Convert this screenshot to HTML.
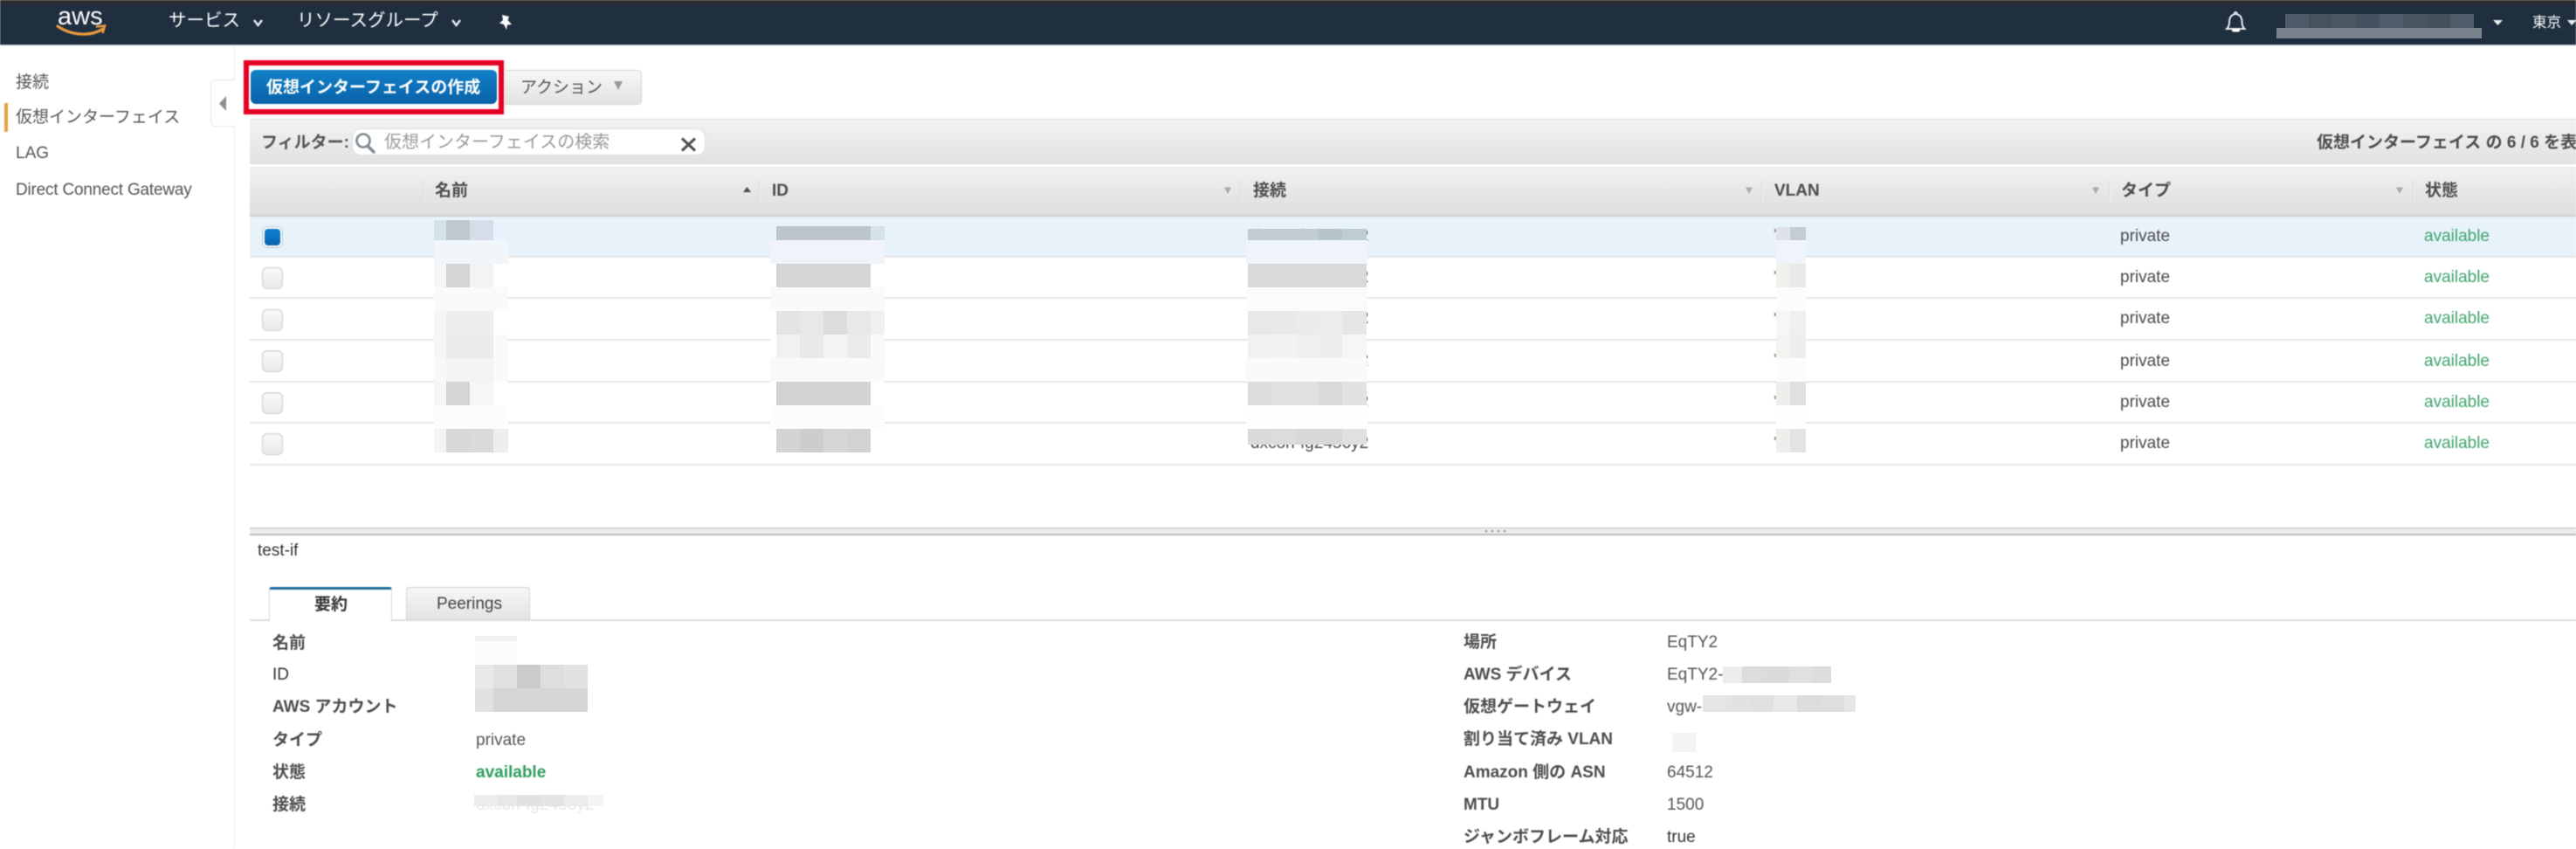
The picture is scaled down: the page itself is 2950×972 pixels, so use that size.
<!DOCTYPE html>
<html lang="ja"><head><meta charset="utf-8"><title>Direct Connect</title>
<style>
html,body{margin:0;padding:0;background:#fff}
#p{position:relative;width:2950px;height:972px;overflow:hidden;background:#fff;font-family:"Liberation Sans","Noto Sans CJK JP",sans-serif;font-size:19px;color:#444}
#b{position:absolute;left:0;top:0;width:2950px;height:972px;filter:blur(.6px)}
#b div,#b span{position:absolute}
.t{line-height:30px;height:30px;white-space:nowrap;color:#4a4a4a;margin-top:2px}
.h{font-weight:bold;color:#4d4d4d}
.n{color:#fff;font-size:20.5px}
.g{color:#3fa56f}
.r{left:286px;width:2664px;height:2px;background:#e4e6e8}
.cb{left:300px;width:22px;height:23px;border:1px solid #cfcfcf;border-radius:6px;background:linear-gradient(#fafafa,#e8e8e8);box-shadow:inset 0 0 0 1px #eee}
.d{top:207px;width:2px;height:25px;background:linear-gradient(90deg,#d6d6d6,#f6f6f6)}
.v{left:2032px;width:2px;height:4px;background:#a8897f}
svg{position:absolute;left:0;top:0}
</style></head><body>
<div id="p">
<div id="b">
<!-- top nav -->
<div style="left:0;top:0;width:2950px;height:51px;background:#1f2f3f"></div>
<div style="left:0;top:0;width:2950px;height:5px;background:#2b2b2b"></div>
<div style="left:0;top:51px;width:2950px;height:1px;background:#aab0b5"></div>
<div class="t" style="left:66px;top:-1px;color:#fff;font-size:29px;line-height:36px;height:36px">aws</div>
<div class="t n" style="left:193px;top:7px">サービス</div>
<div class="t n" style="left:340px;top:7px">リソースグループ</div>
<div class="t n" style="left:2900px;top:9px;font-size:16.5px">東京</div>

<!-- sidebar -->
<div style="left:268px;top:52px;width:1px;height:920px;background:#ececec"></div>
<div class="t" style="left:18px;top:78px;color:#555">接続</div>
<div class="t" style="left:18px;top:118px;color:#555">仮想インターフェイス</div>
<div style="left:5px;top:118px;width:4px;height:33px;background:#e8a33d"></div>
<div class="t" style="left:18px;top:159px;color:#555">LAG</div>
<div class="t" style="left:18px;top:201px;color:#555;letter-spacing:-.2px">Direct Connect Gateway</div>
<div style="left:241px;top:91px;width:27px;height:52px;border:1px solid #e6e6e6;border-right:0;border-radius:5px 0 0 5px;background:#fff"></div>

<!-- toolbar buttons -->
<div style="left:279px;top:69px;width:286px;height:50px;border:6px solid #e60023;background:#fff"></div>
<div style="left:287px;top:80px;width:282px;height:39px;border-radius:6px;background:linear-gradient(#1280c8,#0a62a8)"></div>
<div class="t" style="left:305px;top:84px;color:#fff;font-weight:bold">仮想インターフェイスの作成</div>
<div style="left:578px;top:80px;width:156px;height:38px;border:1px solid #d2d2d2;border-left:0;border-radius:0 5px 5px 0;background:linear-gradient(#f8f8f8,#e2e2e2)"></div>
<div class="t" style="left:596px;top:84px;color:#555">アクション</div>

<!-- filter bar -->
<div style="left:286px;top:136px;width:2664px;height:52px;background:linear-gradient(#f2f2f2,#e2e2e2);border-top:1px solid #dcdcdc;box-sizing:border-box"></div>
<div class="t" style="left:299px;top:147px;font-weight:bold;font-size:19px;color:#555">フィルター:</div>
<div style="left:404px;top:148px;width:403px;height:29px;border-radius:9px;background:#fff;box-shadow:0 0 0 1px #dedede"></div>
<div class="t" style="left:440px;top:146px;font-size:20px;color:#9a9a9a">仮想インターフェイスの検索</div>
<div class="t h" style="left:2653px;top:147px">仮想インターフェイス の 6 / 6 を表示中</div>

<!-- table head -->
<div style="left:286px;top:191px;width:2664px;height:55px;background:linear-gradient(#f1f1f1,#dedede);border-top:1px solid #e6e6e6;box-sizing:border-box"></div>
<div style="left:286px;top:246px;width:2664px;height:2px;background:#cdcfd1"></div>
<div class="d" style="left:484px"></div><div class="d" style="left:869px"></div><div class="d" style="left:1420px"></div><div class="d" style="left:2017px"></div><div class="d" style="left:2415px"></div><div class="d" style="left:2763px"></div>
<div class="t h" style="left:498px;top:202px">名前</div>
<div class="t h" style="left:884px;top:202px">ID</div>
<div class="t h" style="left:1435px;top:202px">接続</div>
<div class="t h" style="left:2032px;top:202px">VLAN</div>
<div class="t h" style="left:2429px;top:202px">タイプ</div>
<div class="t h" style="left:2777px;top:202px">状態</div>

<!-- rows -->
<div style="left:286px;top:248px;width:2664px;height:45px;background:#e8f2fb"></div>
<div class="r" style="top:293px"></div><div class="r" style="top:340px"></div><div class="r" style="top:388px"></div><div class="r" style="top:436px"></div><div class="r" style="top:483px"></div><div class="r" style="top:531px"></div>
<div class="cb" style="top:259px;background:#fff;border-color:#bcd3e4"></div>
<div style="left:303px;top:262px;width:18px;height:19px;border-radius:4px;background:linear-gradient(#0f7fd0,#0866b0)"></div>
<div class="cb" style="top:306px"></div><div class="cb" style="top:354px"></div><div class="cb" style="top:401px"></div><div class="cb" style="top:449px"></div><div class="cb" style="top:496px"></div>

<div class="t" style="left:1432px;top:254px">dxcon-fg2456y2</div>
<div class="t" style="left:1432px;top:301px">dxcon-fg2456y2</div>
<div class="t" style="left:1432px;top:348px">dxcon-fg2456y2</div>
<div class="t" style="left:1432px;top:397px">dxcon-fg2456y2</div>
<div class="t" style="left:1432px;top:444px">dxcon-fg2456y2</div>
<div class="t" style="left:1432px;top:491px">dxcon-fg2456y2</div>

<div class="v" style="top:262px"></div><div class="v" style="top:310px"></div><div class="v" style="top:358px"></div><div class="v" style="top:405px"></div><div class="v" style="top:453px"></div><div class="v" style="top:500px"></div>

<div class="t" style="left:2428px;top:254px">private</div><div class="t g" style="left:2776px;top:254px">available</div>
<div class="t" style="left:2428px;top:301px">private</div><div class="t g" style="left:2776px;top:301px">available</div>
<div class="t" style="left:2428px;top:348px">private</div><div class="t g" style="left:2776px;top:348px">available</div>
<div class="t" style="left:2428px;top:397px">private</div><div class="t g" style="left:2776px;top:397px">available</div>
<div class="t" style="left:2428px;top:444px">private</div><div class="t g" style="left:2776px;top:444px">available</div>
<div class="t" style="left:2428px;top:491px">private</div><div class="t g" style="left:2776px;top:491px">available</div>

<!-- splitter -->
<div style="left:286px;top:604px;width:2664px;height:9px;background:#ececec;border-top:1px solid #bdbdbd;border-bottom:2px solid #bdbdbd;box-sizing:border-box"></div>

<!-- detail -->
<div class="t" style="left:295px;top:614px;color:#333">test-if</div>
<div style="left:286px;top:709px;width:2664px;height:2px;background:#dcdcdc"></div>
<div style="left:308px;top:672px;width:139px;height:36px;border:1px solid #d8d8d8;border-top:3px solid #1f6a9a;border-bottom:0;border-radius:3px 3px 0 0;background:#fff"></div>
<div class="t h" style="left:360px;top:676px;color:#333">要約</div>
<div style="left:465px;top:672px;width:140px;height:36px;border:1px solid #d4d4d4;border-bottom:0;border-radius:3px 3px 0 0;background:linear-gradient(#f6f6f6,#e4e4e4)"></div>
<div class="t" style="left:500px;top:675px;color:#444">Peerings</div>

<div class="t h" style="left:312px;top:720px">名前</div>
<div class="t h" style="left:312px;top:756px;font-weight:normal;color:#333">ID</div>
<div class="t h" style="left:312px;top:793px">AWS アカウント</div>
<div class="t h" style="left:312px;top:831px">タイプ</div>
<div class="t h" style="left:312px;top:868px">状態</div>
<div class="t h" style="left:312px;top:905px">接続</div>
<div class="t" style="left:545px;top:831px;color:#555">private</div>
<div class="t g" style="left:545px;top:868px;font-weight:bold;color:#2f9e5f">available</div>
<div class="t" style="left:545px;top:905px;color:#e6e6e6">dxcon-fg2456y2</div>

<div class="t h" style="left:1676px;top:719px">場所</div>
<div class="t h" style="left:1676px;top:756px">AWS デバイス</div>
<div class="t h" style="left:1676px;top:793px">仮想ゲートウェイ</div>
<div class="t h" style="left:1676px;top:830px">割り当て済み VLAN</div>
<div class="t h" style="left:1676px;top:868px">Amazon 側の ASN</div>
<div class="t h" style="left:1676px;top:905px">MTU</div>
<div class="t h" style="left:1676px;top:942px">ジャンボフレーム対応</div>
<div class="t" style="left:1909px;top:719px;color:#555">EqTY2</div>
<div class="t" style="left:1909px;top:756px;color:#555">EqTY2-</div>
<div class="t" style="left:1909px;top:793px;color:#555">vgw-</div>
<div class="t" style="left:1909px;top:868px;color:#555">64512</div>
<div class="t" style="left:1909px;top:905px;color:#555">1500</div>
<div class="t" style="left:1909px;top:942px;color:#333">true</div>

<!-- icons -->
<svg width="2950" height="972" viewBox="0 0 2950 972" fill="none">
  <path d="M66 30C82 41 104 42 118 33" stroke="#e89a3c" stroke-width="3.2" stroke-linecap="round"/>
  <path d="M110 30.5L120 29.5L117.5 38" stroke="#e89a3c" stroke-width="2.6" fill="none"/>
  <path d="M291 23L295.500 29L300 23" stroke="#e8ecef" stroke-width="2.4"/>
  <path d="M518 23L522.500 29L527 23" stroke="#e8ecef" stroke-width="2.4"/>
  <path d="M575 17L583 19L581.500 23L586 28L581 28.500L580 34L577 28L572 26.500L576 23Z" fill="#fff"/>
  <path d="M2561 14a1.500 1.500 0 0 1 1.500 2.200c4.500 1 6 4.500 6 9.300c0 3.500 1 5.500 3 7.500H2551c2-2 3-4 3-7.500c0-4.800 1.500-8.300 6-9.300a1.500 1.500 0 0 1 1-2.200Z" stroke="#fff" stroke-width="1.800" transform="translate(-1 0)"/>
  <rect x="2556" y="33" width="9" height="3.500" rx="1.700" fill="#fff"/>
  <path d="M2855 23H2866L2860.500 29Z" fill="#e8ecef"/>
  <path d="M2940 23H2950V24L2945 29Z" fill="#e8ecef"/>
  <path d="M259 110V127L251 118.500Z" fill="#8a8f94"/>
  <path d="M703 93H713L708 103Z" fill="#9a9a9a"/>
  <circle cx="416" cy="161" r="7.500" stroke="#7d8890" stroke-width="2.600"/>
  <path d="M421 167L428 174" stroke="#7d8890" stroke-width="3.400" stroke-linecap="round"/>
  <path d="M781 158.500L796 172.500M796 158.500L781 172.500" stroke="#4c4c4c" stroke-width="3"/>
  <path d="M851 220L855.500 214L860 220Z" fill="#4c4c4c"/>
  <path d="M1402 214.500H1410L1406 222Z" fill="#aaa"/>
  <path d="M1999 214.500H2007L2003 222Z" fill="#aaa"/>
  <path d="M2396 214.500H2404L2400 222Z" fill="#aaa"/>
  <path d="M2744 214.500H2752L2748 222Z" fill="#aaa"/>
  <g fill="#9a9a9a"><circle cx="1702" cy="608" r="1.300"/><circle cx="1709" cy="608" r="1.300"/><circle cx="1716" cy="608" r="1.300"/><circle cx="1723" cy="608" r="1.300"/></g>
</svg>
</div>

<!-- mosaics (redaction blocks) -->
<svg width="2950" height="972" viewBox="0 0 2950 972" shape-rendering="crispEdges">
<!-- header account -->
<rect x="2617" y="16" width="27" height="16" fill="#4d5b68"/><rect x="2644" y="16" width="27" height="16" fill="#46535f"/><rect x="2671" y="16" width="27" height="16" fill="#4a5864"/><rect x="2698" y="16" width="27" height="16" fill="#445260"/><rect x="2725" y="16" width="27" height="16" fill="#4f5c69"/><rect x="2752" y="16" width="27" height="16" fill="#48545f"/><rect x="2779" y="16" width="27" height="16" fill="#45525e"/><rect x="2806" y="16" width="27" height="16" fill="#4e5b68"/>
<rect x="2607" y="32" width="235" height="12" fill="#79838e"/>
<!-- name col -->
<rect x="497" y="252" width="14" height="23" fill="#d6e2ea"/><rect x="511" y="252" width="27" height="23" fill="#bdc8cf"/><rect x="538" y="252" width="27" height="23" fill="#d6dde9"/>
<rect x="497" y="275" width="85" height="27" fill="#f1f6fb"/>
<rect x="497" y="302" width="14" height="27" fill="#f6f6f6"/><rect x="511" y="302" width="27" height="27" fill="#d5d5d5"/><rect x="538" y="302" width="27" height="27" fill="#f3f3f3"/><rect x="565" y="302" width="17" height="27" fill="#fff"/>
<rect x="497" y="329" width="85" height="27" fill="#fafafa"/>
<rect x="497" y="356" width="14" height="27" fill="#f6f6f5"/><rect x="511" y="356" width="54" height="27" fill="#eee"/><rect x="565" y="356" width="17" height="27" fill="#fff"/>
<rect x="497" y="383" width="14" height="27" fill="#f5f5f5"/><rect x="511" y="383" width="54" height="27" fill="#ebebeb"/><rect x="565" y="383" width="17" height="27" fill="#fafafa"/>
<rect x="497" y="410" width="14" height="27" fill="#f8f8f7"/><rect x="511" y="410" width="54" height="27" fill="#f4f4f3"/><rect x="565" y="410" width="17" height="27" fill="#fafafa"/>
<rect x="497" y="437" width="14" height="27" fill="#f6f6f6"/><rect x="511" y="437" width="27" height="27" fill="#d5d5d5"/><rect x="538" y="437" width="27" height="27" fill="#f6f6f6"/><rect x="565" y="437" width="17" height="27" fill="#fff"/>
<rect x="497" y="464" width="85" height="27" fill="#fcfcfc"/>
<rect x="497" y="491" width="14" height="27" fill="#f4f4f4"/><rect x="511" y="491" width="27" height="27" fill="#d6d7d9"/><rect x="538" y="491" width="27" height="27" fill="#dadada"/><rect x="565" y="491" width="17" height="27" fill="#eee"/>
<!-- id col -->
<rect x="889" y="259" width="108" height="16" fill="#bcc4cc"/><rect x="997" y="259" width="16" height="16" fill="#d6e2ea"/>
<rect x="882" y="275" width="131" height="27" fill="#f0f4fa"/>
<rect x="882" y="302" width="7" height="27" fill="#fff"/><rect x="889" y="302" width="108" height="27" fill="#d5d5d5"/><rect x="997" y="302" width="16" height="27" fill="#fff"/>
<rect x="882" y="329" width="131" height="27" fill="#fafafa"/>
<rect x="882" y="356" width="7" height="27" fill="#fff"/><rect x="889" y="356" width="27" height="27" fill="#e4e4e4"/><rect x="916" y="356" width="27" height="27" fill="#e8e8e8"/><rect x="943" y="356" width="27" height="27" fill="#dcdcdc"/><rect x="970" y="356" width="27" height="27" fill="#e8e8e8"/><rect x="997" y="356" width="16" height="27" fill="#f0f0f0"/>
<rect x="882" y="383" width="7" height="27" fill="#fff"/><rect x="889" y="383" width="27" height="27" fill="#f1f1f1"/><rect x="916" y="383" width="27" height="27" fill="#e9e9e9"/><rect x="943" y="383" width="27" height="27" fill="#f4f4f4"/><rect x="970" y="383" width="27" height="27" fill="#ebebeb"/><rect x="997" y="383" width="16" height="27" fill="#fafafa"/>
<rect x="882" y="410" width="131" height="27" fill="#f9f9f9"/>
<rect x="882" y="437" width="7" height="27" fill="#fff"/><rect x="889" y="437" width="108" height="27" fill="#d3d3d3"/><rect x="997" y="437" width="16" height="27" fill="#fff"/>
<rect x="882" y="464" width="131" height="27" fill="#fcfcfc"/>
<rect x="882" y="491" width="7" height="27" fill="#fff"/><rect x="889" y="491" width="27" height="27" fill="#d4d4d4"/><rect x="916" y="491" width="27" height="27" fill="#cdcdcd"/><rect x="943" y="491" width="27" height="27" fill="#d6d6d6"/><rect x="970" y="491" width="27" height="27" fill="#d2d2d2"/>
<!-- connection col -->
<rect x="1429" y="262" width="81" height="13" fill="#c2ccd4"/><rect x="1510" y="262" width="27" height="13" fill="#b8c4cc"/><rect x="1537" y="262" width="28" height="13" fill="#c0ccd4"/>
<rect x="1427" y="275" width="139" height="27" fill="#eff4fa"/>
<rect x="1429" y="302" width="136" height="27" fill="#d9d9d9"/><rect x="1427" y="329" width="139" height="27" fill="#fbfbfb"/>
<rect x="1429" y="356" width="27" height="27" fill="#e8e8e8"/><rect x="1456" y="356" width="28" height="27" fill="#e9e9e9"/><rect x="1484" y="356" width="26" height="27" fill="#ebebeb"/><rect x="1510" y="356" width="27" height="27" fill="#ededed"/><rect x="1537" y="356" width="28" height="27" fill="#e6e6e6"/>
<rect x="1429" y="383" width="27" height="27" fill="#f1f1f1"/><rect x="1456" y="383" width="28" height="27" fill="#f2f2f2"/><rect x="1484" y="383" width="26" height="27" fill="#f0f0f0"/><rect x="1510" y="383" width="27" height="27" fill="#eee"/><rect x="1537" y="383" width="28" height="27" fill="#f6f6f6"/>
<rect x="1427" y="410" width="139" height="27" fill="#fafafa"/>
<rect x="1429" y="437" width="27" height="27" fill="#dcdcdc"/><rect x="1456" y="437" width="54" height="27" fill="#e0e0e0"/><rect x="1510" y="437" width="27" height="27" fill="#d9d9d9"/><rect x="1537" y="437" width="28" height="27" fill="#e2e2e2"/>
<rect x="1427" y="464" width="139" height="27" fill="#fefefe"/>
<rect x="1429" y="491" width="27" height="18" fill="#dadada"/><rect x="1456" y="491" width="28" height="18" fill="#dcdcdc"/><rect x="1484" y="491" width="53" height="18" fill="#d8d8d8"/><rect x="1537" y="491" width="28" height="18" fill="#e0e0e0"/>
<!-- vlan col -->
<rect x="2034" y="260" width="16" height="15" fill="#dde3e8"/><rect x="2050" y="260" width="18" height="15" fill="#c4cdd6"/>
<rect x="2034" y="275" width="34" height="27" fill="#eff3fa"/>
<rect x="2034" y="302" width="16" height="27" fill="#f0f0ec"/><rect x="2050" y="302" width="18" height="27" fill="#e8eaea"/>
<rect x="2034" y="329" width="34" height="27" fill="#fcfcfc"/>
<rect x="2034" y="356" width="16" height="27" fill="#f6f6f4"/><rect x="2050" y="356" width="18" height="27" fill="#eef0f0"/>
<rect x="2034" y="383" width="16" height="27" fill="#f3f3f2"/><rect x="2050" y="383" width="18" height="27" fill="#eee"/>
<rect x="2034" y="410" width="34" height="27" fill="#fcfcfc"/>
<rect x="2034" y="437" width="16" height="27" fill="#eeeeec"/><rect x="2050" y="437" width="18" height="27" fill="#e0e0e0"/>
<rect x="2034" y="464" width="34" height="27" fill="#fefefe"/>
<rect x="2034" y="491" width="16" height="27" fill="#eeeeec"/><rect x="2050" y="491" width="18" height="27" fill="#e2e4e4"/>
<!-- detail left -->
<rect x="544" y="728" width="48" height="6" fill="#f0f0f0"/><rect x="544" y="734" width="48" height="27" fill="#fcfcfc"/>
<rect x="544" y="761" width="21" height="27" fill="#e8e8e8"/><rect x="565" y="761" width="27" height="27" fill="#e0e0e0"/><rect x="592" y="761" width="27" height="27" fill="#cbcbcb"/><rect x="619" y="761" width="27" height="27" fill="#dedede"/><rect x="646" y="761" width="27" height="27" fill="#e2e2e2"/>
<rect x="544" y="788" width="21" height="27" fill="#e2e2e2"/><rect x="565" y="788" width="108" height="27" fill="#d6d6d6"/>
<rect x="543" y="910" width="27" height="13" fill="#ececec"/><rect x="570" y="910" width="22" height="13" fill="#e8e8e8"/><rect x="592" y="910" width="27" height="13" fill="#e2e2e2"/><rect x="619" y="910" width="27" height="13" fill="#e4e4e4"/><rect x="646" y="910" width="27" height="13" fill="#ececec"/><rect x="673" y="910" width="18" height="13" fill="#f4f4f4"/>
<!-- detail right -->
<rect x="1973" y="763" width="22" height="19" fill="#ececec"/><rect x="1995" y="763" width="27" height="19" fill="#dcdcdc"/><rect x="2022" y="763" width="27" height="19" fill="#dadada"/><rect x="2049" y="763" width="27" height="19" fill="#e0e0e0"/><rect x="2076" y="763" width="21" height="19" fill="#dcdcdc"/>
<rect x="1950" y="796" width="27" height="19" fill="#e6e6e6"/><rect x="1977" y="796" width="27" height="19" fill="#e2e2e2"/><rect x="2004" y="796" width="27" height="19" fill="#e0e0e0"/><rect x="2031" y="796" width="27" height="19" fill="#e8e8e8"/><rect x="2058" y="796" width="27" height="19" fill="#dcdcdc"/><rect x="2085" y="796" width="27" height="19" fill="#dedede"/><rect x="2112" y="796" width="13" height="19" fill="#e6e6e6"/>
<rect x="1915" y="839" width="27" height="22" fill="#f4f4f4"/>
</svg>
</div>
</body></html>
